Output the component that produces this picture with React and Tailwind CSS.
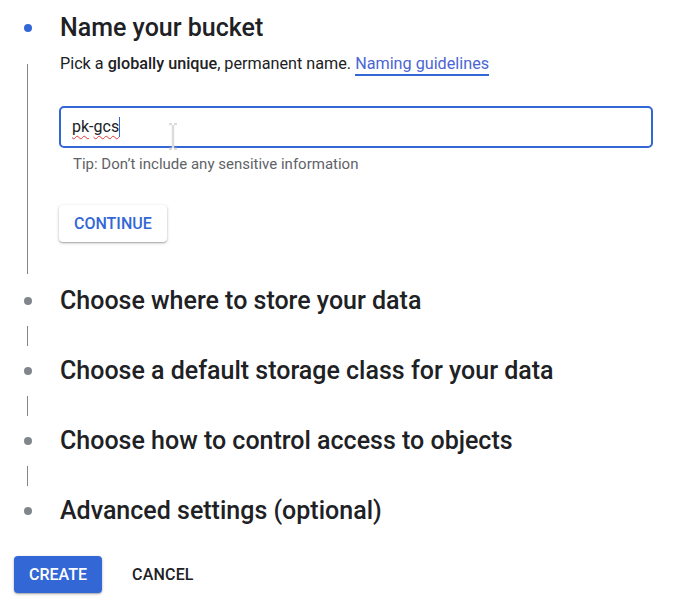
import React from 'react'

const steps = [
  'Choose where to store your data',
  'Choose a default storage class for your data',
  'Choose how to control access to objects',
  'Advanced settings (optional)',
]

function Dot({ active }) {
  return (
    <div className="h-[32px] flex items-center pl-6">
      <div className={'w-2 h-2 rounded-full ' + (active ? 'bg-[#3367d6]' : 'bg-[#80868b]')} />
    </div>
  )
}

function Step({ title, last }) {
  return (
    <div>
      <div className="flex">
        <div className="w-[60px] shrink-0"><Dot /></div>
        <h2 className="text-[25px] leading-[32px] font-medium text-[#202124]">{title}</h2>
      </div>
      {!last && <div className="ml-[27px] w-px h-[20px] my-[9px] bg-[#80868b]" />}
    </div>
  )
}

export default function App() {
  const [name, setName] = React.useState('pk-gcs')

  return (
    <div className="w-[684px] h-[613px] bg-white font-[Roboto,sans-serif] text-[#202124] pt-[12px] overflow-hidden">
      <div className="flex">
        <div className="w-[60px] shrink-0 flex flex-col">
          <Dot active />
          <div className="ml-[27px] w-px bg-[#80868b] mt-[20px] flex-1" />
        </div>
        <div className="flex-1 pb-[32px] pr-[31px]">
          <h2 className="text-[25px] leading-[32px] font-medium">Name your bucket</h2>
          <p className="mt-2 text-[16.2px] leading-6">
            Pick a <span className="font-medium">globally unique</span>, permanent name.{' '}
            <a href="#" className="text-[#4a66d4] border-b-2 border-[#3367d6] pb-[1px]">Naming guidelines</a>
          </p>
          <div className="relative mt-[30px] -ml-px h-[42px] border-2 border-[#3367d6] rounded-[5px] flex items-center pl-[11px]">
            <span className="text-[16px] leading-6 whitespace-pre">
              <span className="underline decoration-wavy decoration-[#e53935] decoration-1 underline-offset-[3px]">pk</span>
              -
              <span className="underline decoration-wavy decoration-[#e53935] decoration-1 underline-offset-[3px]">gcs</span>
            </span>
            <span className="w-px h-[20px] bg-[#3367d6]" />
            <input
              value={name}
              onChange={e => setName(e.target.value)}
              className="absolute inset-0 opacity-0"
            />
            <svg className="absolute left-[106px] top-[15px]" width="12" height="27" viewBox="0 0 12 27">
              <path d="M2 1h3M7 1h3M6 2v23M2 26h3M7 26h3" stroke="#dcdcdc" strokeWidth="2.5" fill="none" />
            </svg>
          </div>
          <p className="mt-[6px] pl-[13px] text-[15px] leading-5 text-[#5f6368]">Tip: Don’t include any sensitive information</p>
          <button className="mt-[31px] -ml-px h-[37px] px-[15px] rounded-[4px] bg-white text-[#3367d6] text-[16px] font-medium shadow-[0_1px_3px_rgba(60,64,67,0.35),0_1px_1px_rgba(60,64,67,0.2)]">
            CONTINUE
          </button>
        </div>
      </div>
      <div className="mt-[11px]">
        {steps.map((s, i) => (
          <Step key={s} title={s} last={i === steps.length - 1} />
        ))}
      </div>
      <div className="flex items-center mt-[29px] pl-[14px]">
        <button className="h-[37px] px-[15px] rounded-[4px] bg-[#3367d6] text-white text-[16px] font-medium shadow-[0_1px_3px_rgba(60,64,67,0.35),0_1px_1px_rgba(60,64,67,0.2)]">
          CREATE
        </button>
        <button className="ml-[15px] h-[37px] px-[15px] text-[#202124] text-[16px] font-medium tracking-[0.2px]">
          CANCEL
        </button>
      </div>
    </div>
  )
}
